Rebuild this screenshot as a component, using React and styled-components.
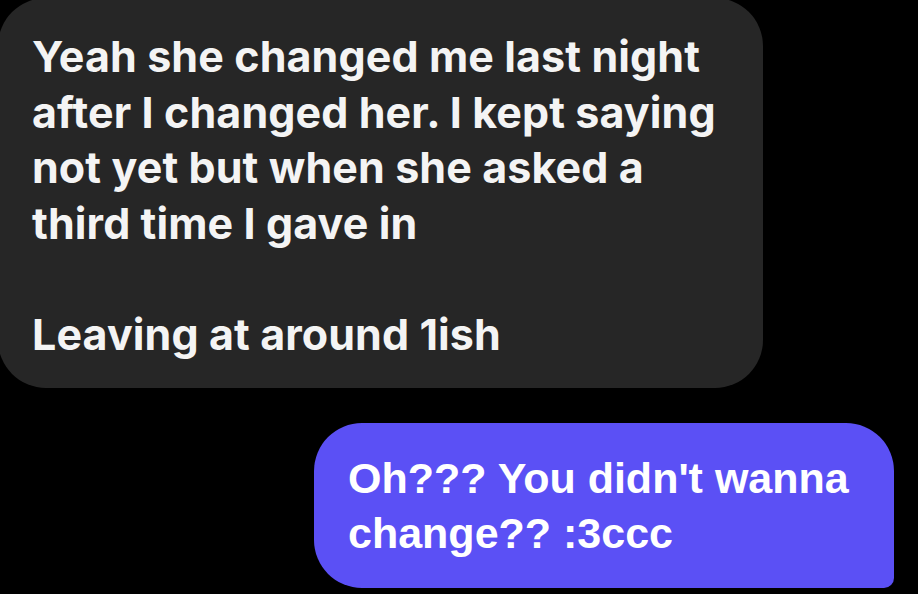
import React from "react";
import styled, { createGlobalStyle } from "styled-components";

const GlobalStyle = createGlobalStyle`
  html, body {
    margin: 0;
    padding: 0;
    background: #000;
    overflow: hidden;
  }
`;

const Thread = styled.div`
  width: 918px;
  height: 594px;
  background: #000;
  display: flex;
  flex-direction: column;
  gap: 35px;
  overflow: hidden;
`;

const Bubble = styled.div`
  box-sizing: border-box;
  width: ${p => p.width}px;
  white-space: pre-line;
  font-weight: 700;
  font-size: 43px;
  line-height: 55.5px;
  border-radius: 48px;
`;

const Received = styled(Bubble)`
  align-self: flex-start;
  margin: -2px 0 0 -2px;
  padding: 31px 30px 26px 34px;
  background: #262626;
  color: #f4f4f4;
  font-family: Inter, "Noto Sans", sans-serif;
  letter-spacing: 0.1px;
`;

const Sent = styled(Bubble)`
  align-self: flex-end;
  margin-right: 24px;
  padding: 28px 30px 27px 34px;
  background: #5b50f5;
  color: #fff;
  border-bottom-right-radius: 10px;
  font-family: "Liberation Sans", Arial, sans-serif;
  line-height: 55px;
`;

export default function App() {
  return (
    <>
      <GlobalStyle />
      <Thread>
        <Received width={765}>
          {"Yeah she changed me last night\nafter I changed her. I kept saying\nnot yet but when she asked a\nthird time I gave in\n\nLeaving at around 1ish"}
        </Received>
        <Sent width={580}>{"Oh??? You didn't wanna\nchange?? :3ccc"}</Sent>
      </Thread>
    </>
  );
}
